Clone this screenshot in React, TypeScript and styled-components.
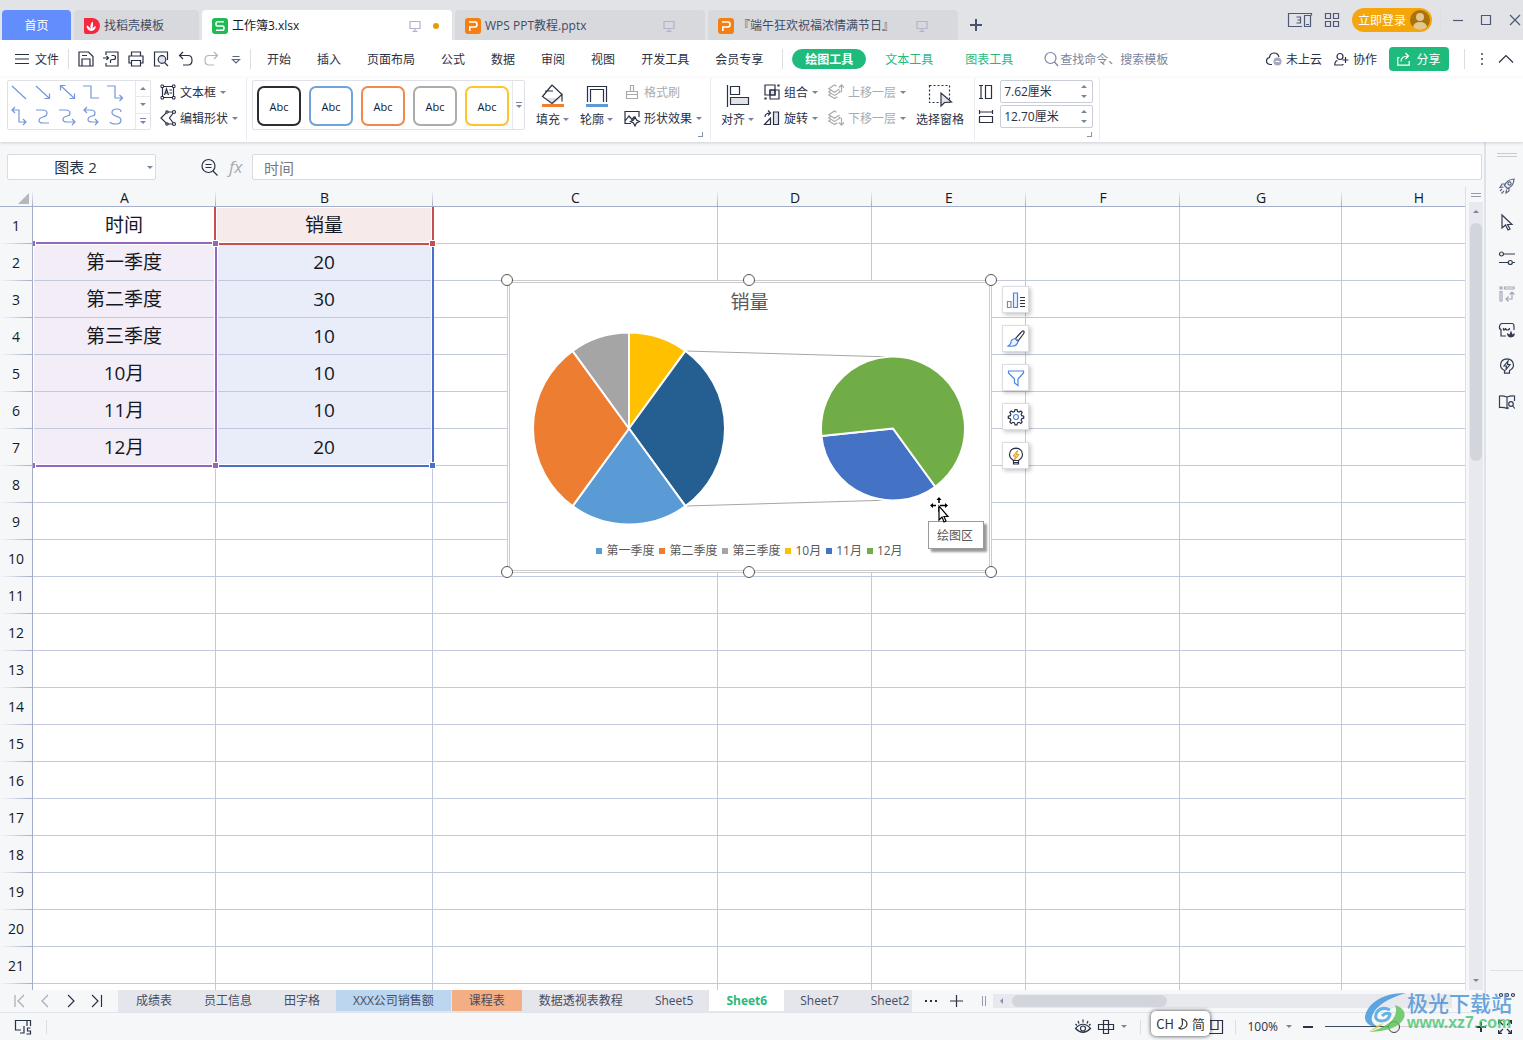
import React from "react";
import styled, { createGlobalStyle, css } from "styled-components";

const INK = "#2a3145";
const MUTED = "#7a84a0";
const GREEN = "#1fbb7d";
const LINE = "#c3c9dc";
const HEAD_LINE = "#a5aec8";
const PANEL = "#f5f7f9";
const LATIN_FIRST = '"Open Sans", "Noto Sans CJK SC", sans-serif';

const GlobalStyle = createGlobalStyle`
  * { box-sizing: border-box; }
  body {
    margin: 0;
    font-family: "Noto Sans CJK SC", sans-serif;
    font-size: 12px;
    line-height: 16px;
    color: ${INK};
    overflow: hidden;
  }
  button, input {
    font: inherit;
    color: inherit;
    margin: 0;
    padding: 0;
    border: 0;
    background: none;
    white-space: nowrap;
  }
`;

/* ---------- drawing helpers ---------- */

const Svg = styled.svg`
  display: block;
  flex: none;
  overflow: visible;
  fill: none;
  stroke: currentColor;
  stroke-width: 1.2;
`;

type IconProps = {
  children: React.ReactNode;
  w?: number;
  h?: number;
  color?: string;
};

const Icon = ({ children, w = 16, h = 16, color }: IconProps) => (
  <Svg width={w} height={h} viewBox={`0 0 ${w} ${h}`} color={color} aria-hidden="true">
    {children}
  </Svg>
);

const Caret = styled.i<{ $up?: boolean }>`
  flex: none;
  width: 0;
  height: 0;
  border: 3px solid transparent;
  ${(p) =>
    p.$up
      ? css`border-bottom: 3px solid ${MUTED}; border-top: 0;`
      : css`border-top: 3px solid ${MUTED}; border-bottom: 0;`}
`;

const Divider = styled.span<{ $h?: number }>`
  flex: none;
  width: 1px;
  height: ${(p) => p.$h ?? 20}px;
  background: #dcdee4;
`;

const Spacer = styled.span`
  flex: 1;
`;

/* ---------- page ---------- */

const Page = styled.div`
  position: relative;
  display: flex;
  flex-direction: column;
  height: 100vh;
  background: ${PANEL};
`;

/* ---------- title bar ---------- */

const TitleBar = styled.header`
  display: flex;
  flex: none;
  height: 40px;
  padding-left: 2px;
  background: #e2e3e7;
`;

const DocTabs = styled.nav`
  display: flex;
  align-items: flex-end;
  gap: 3px;
`;

const DocTab = styled.button<{ $kind?: "home" | "active"; $w: number }>`
  display: flex;
  align-items: center;
  justify-content: ${(p) => (p.$kind === "home" ? "center" : "flex-start")};
  gap: 4px;
  width: ${(p) => p.$w}px;
  height: 30px;
  padding: 2px ${(p) => (p.$kind === "home" ? 0 : 10)}px 0;
  border-radius: 4px 4px 0 0;
  font-family: ${LATIN_FIRST};
  background: ${(p) =>
    p.$kind === "home" ? "#628efd" : p.$kind === "active" ? "#fff" : "#d8d9dd"};
  color: ${(p) => (p.$kind === "home" ? "#fff" : p.$kind === "active" ? "#15181f" : "#434b62")};
`;

const TabTail = styled.span`
  display: flex;
  align-items: center;
  justify-content: flex-end;
  gap: 12px;
  flex: 1;
  padding: 0 3px 0 0;
`;

const QuietTail = styled(TabTail)`
  padding-right: 20px;
`;

const Dot = styled.i`
  width: 6px;
  height: 6px;
  border-radius: 50%;
  background: #e69a08;
`;

const NewTab = styled.button`
  display: grid;
  place-items: center;
  width: 30px;
  height: 30px;
  color: #4a536c;
`;

const WindowTools = styled.div`
  display: flex;
  align-items: center;
  gap: 8px;
  color: #4e5976;
`;

const AppTools = styled.div`
  display: flex;
  align-items: center;
  gap: 13px;
  margin-right: 5px;
`;

const LoginPill = styled.button`
  display: flex;
  align-items: center;
  gap: 4px;
  height: 24px;
  padding: 0 2px 0 6px;
  border-radius: 12px;
  background: #f5a60b;
  color: #fff;
`;

const WindowButtons = styled.div`
  display: flex;
  align-items: center;
  gap: 18px;
  padding: 0 2px 0 4px;
`;

const PlainButton = styled.button`
  display: flex;
  align-items: center;
  justify-content: center;
`;

/* ---------- menu row ---------- */

const MenuRow = styled.div`
  display: flex;
  flex: none;
  align-items: center;
  height: 38px;
  padding: 0 10px 0 15px;
  background: #fff;
`;

const FileButton = styled(PlainButton)`
  gap: 6px;
  margin-right: 9px;
`;

const QuickTools = styled.div`
  display: flex;
  align-items: center;
  gap: 9px;
  margin: 0 6px 0 9px;
`;

const MenuTabs = styled.nav`
  display: flex;
  align-items: center;
  gap: 26px;
  margin: 0 19px 0 16px;
`;

const MenuTab = styled.button<{ $green?: boolean }>`
  color: ${(p) => (p.$green ? GREEN : INK)};
`;

const ToolTabs = styled.nav`
  display: flex;
  align-items: center;
  gap: 32px;
`;

const ActiveTool = styled.button`
  height: 20px;
  padding: 0 13px;
  margin-left: 9px;
  margin-right: -13px;
  border-radius: 10px;
  background: ${GREEN};
  color: #fff;
  font-weight: 700;
`;

const SearchBox = styled.label`
  display: flex;
  align-items: center;
  width: 200px;
  margin-left: 31px;
  color: ${MUTED};
  input {
    flex: 1;
    min-width: 0;
    outline: none;
  }
  input::placeholder {
    color: ${MUTED};
    opacity: 1;
  }
`;

const RightMenu = styled.div`
  display: flex;
  align-items: center;
  gap: 12px;
`;

const LabelButton = styled(PlainButton)`
  gap: 4px;
`;

const ShareButton = styled(PlainButton)`
  gap: 6px;
  width: 60px;
  height: 24px;
  margin-right: 3px;
  border-radius: 4px;
  background: ${GREEN};
  color: #fff;
`;

/* ---------- ribbon ---------- */

const Ribbon = styled.section`
  position: relative;
  z-index: 2;
  display: flex;
  flex: none;
  height: 64px;
  padding-left: 7px;
  background: #fff;
  box-shadow: 0 1px 3px rgba(60, 70, 90, 0.22);
`;

const RibbonGroup = styled.div<{ $gap?: number; $pl?: number; $pr?: number }>`
  position: relative;
  display: flex;
  gap: ${(p) => p.$gap ?? 10}px;
  height: 62px;
  padding: 2px ${(p) => p.$pr ?? 6}px 0 ${(p) => p.$pl ?? 0}px;
  border-right: 1px solid #eaebef;
`;

const Gallery = styled.div`
  display: flex;
  height: 50px;
  border: 1px solid #dfe1e8;
  border-radius: 2px;
`;

const ShapeGrid = styled.div`
  display: grid;
  grid-template-columns: repeat(5, 24px);
  grid-template-rows: repeat(2, 24px);
  width: 127px;
  color: #7396dc;
`;

const SpinColumn = styled.div<{ $w: number }>`
  display: flex;
  flex-direction: column;
  width: ${(p) => p.$w}px;
  border-left: 1px solid #e6e8ee;
`;

const SpinCell = styled.button`
  display: flex;
  flex-direction: column;
  flex: 1;
  align-items: center;
  justify-content: center;
  gap: 2px;
  & + & {
    border-top: 1px solid #e6e8ee;
  }
`;

const Bar = styled.i`
  width: 6px;
  height: 1px;
  background: ${MUTED};
`;

const Stack = styled.div`
  display: flex;
  flex-direction: column;
  gap: 2px;
`;

const RowCommand = styled.button<{ $off?: boolean }>`
  display: flex;
  align-items: center;
  gap: 4px;
  height: 24px;
  color: ${(p) => (p.$off ? "#a9abb0" : INK)};
`;

const StyleList = styled.div`
  display: flex;
  gap: 8px;
  padding: 5px 3px 4px 4px;
`;

const StyleCard = styled.button<{ $c: string }>`
  width: 44px;
  height: 40px;
  padding-top: 1px;
  border: 2px solid ${(p) => p.$c};
  border-radius: 7px;
  color: #15181f;
  font-family: ${LATIN_FIRST};
  font-size: 11px;
`;

const BigCommand = styled.button`
  display: flex;
  flex-direction: column;
  align-items: center;
  gap: 4px;
  height: 48px;
  padding-top: 4px;
`;

const BigLabel = styled.span`
  display: flex;
  align-items: center;
  gap: 3px;
`;

const Corner = styled.i`
  position: absolute;
  right: 7px;
  bottom: 3px;
  width: 5px;
  height: 5px;
  border: solid #8b93a8;
  border-width: 0 1px 1px 0;
`;

const SizeRow = styled.label`
  display: flex;
  align-items: center;
  gap: 7px;
`;

const SizeBox = styled.span`
  display: flex;
  align-items: center;
  width: 93px;
  height: 23px;
  padding: 0 5px 0 3px;
  border: 1px solid #c9cdd8;
  border-radius: 2px;
  font-family: ${LATIN_FIRST};
  input {
    flex: 1;
    width: 60px;
    outline: none;
  }
`;

const Spin = styled.span`
  display: flex;
  flex-direction: column;
  gap: 7px;
`;

/* ---------- workspace ---------- */

const Workspace = styled.div`
  display: flex;
  flex: 1;
  min-height: 0;
`;

const MainColumn = styled.main`
  display: flex;
  flex-direction: column;
  flex: 1;
  min-width: 0;
`;

const FormulaBar = styled.div`
  display: flex;
  flex: none;
  align-items: center;
  height: 45px;
  padding: 5px 2px 0 7px;
  font-size: 15px;
`;

const NameBox = styled.div`
  display: flex;
  align-items: center;
  width: 149px;
  height: 26px;
  padding-right: 2px;
  margin-right: 45px;
  border: 1px solid #d9dbe1;
  border-radius: 2px;
  background: #fff;
  input {
    flex: 1;
    min-width: 0;
    padding-right: 4px;
    font-family: ${LATIN_FIRST};
    text-align: center;
    outline: none;
  }
`;

const FxLabel = styled.label`
  width: 34px;
  padding-left: 11px;
  font-family: "Open Sans", sans-serif;
  font-size: 17px;
  font-style: italic;
  color: #a8abb2;
`;

const FormulaInput = styled.input`
  flex: 1;
  height: 26px;
  padding: 0 11px;
  border: 1px solid #d9dbe1;
  border-radius: 2px;
  background: #fff;
  color: #777a80;
  outline: none;
  font-family: ${LATIN_FIRST};
  line-height: 22px;
`;

const SheetRow = styled.div`
  display: flex;
  flex: 1;
  min-height: 0;
`;

const Sheet = styled.div`
  flex: 1;
  min-width: 0;
  padding-top: 3px;
  overflow: hidden;
  border-right: 1px solid #dcdfe8;
`;

const Canvas = styled.div`
  position: relative;
  background: #fff;
`;

const Grid = styled.table`
  width: 1496px;
  table-layout: fixed;
  border-collapse: separate;
  border-spacing: 0;
  font-family: ${LATIN_FIRST};
  font-size: 19px;
  color: #15181f;
  th,
  td {
    padding: 0;
    font-weight: 400;
    text-align: center;
  }
`;

const ColHead = styled.th`
  height: 17px;
  border-bottom: 1px solid ${HEAD_LINE};
  background: linear-gradient(${PANEL}, ${HEAD_LINE}) right / 1px 100% no-repeat ${PANEL};
  font-size: 14px;
  line-height: 16px;
`;

const CornerHead = styled(ColHead)`
  svg {
    margin-left: 18px;
  }
`;

const RowHead = styled.th`
  height: 37px;
  border-right: 1px solid ${HEAD_LINE};
  background: linear-gradient(to right, ${PANEL}, ${HEAD_LINE}) bottom / 100% 1px no-repeat ${PANEL};
  font-size: 14px;
  line-height: 37px;
`;

const Cell = styled.td<{ $fill?: string }>`
  height: 37px;
  border-right: 1px solid ${LINE};
  border-bottom: 1px solid ${LINE};
  background: ${(p) => p.$fill ?? "#fff"};
  line-height: 36px;
`;

type FrameProps = { $x: number; $y: number; $w: number; $h: number; $c: string; $sides: string };

const RangeFrame = styled.div<FrameProps>`
  position: absolute;
  left: ${(p) => p.$x}px;
  top: ${(p) => p.$y}px;
  width: ${(p) => p.$w}px;
  height: ${(p) => p.$h}px;
  border: solid ${(p) => p.$c};
  border-width: ${(p) => p.$sides};
  box-shadow: inset 0 0 0 1px #fff;
`;

const RangeKnob = styled.i<{ $x: number; $y: number; $c: string; $half?: boolean }>`
  position: absolute;
  left: ${(p) => (p.$half ? p.$x : p.$x - 3)}px;
  top: ${(p) => p.$y - 3}px;
  width: ${(p) => (p.$half ? 3 : 7)}px;
  height: 7px;
  border: 1px solid #fff;
  border-left-width: ${(p) => (p.$half ? 0 : 1)}px;
  background: ${(p) => p.$c};
`;

/* ---------- chart object ---------- */

const ChartObject = styled.figure`
  position: absolute;
  left: 507px;
  top: 90px;
  width: 485px;
  height: 293px;
  margin: 0;
  border: 3px double #cbccd0;
  background: #fff;
  color: #595959;
  font-family: ${LATIN_FIRST};
`;

const ChartTitle = styled.figcaption`
  padding-top: 5px;
  font-size: 19px;
  line-height: 28px;
  text-align: center;
`;

const PieArea = styled.svg`
  display: block;
  margin: 16px 0 0 23px;
`;

const Legend = styled.ul`
  display: flex;
  justify-content: center;
  gap: 5px;
  margin: 17px 0 0;
  padding: 0;
  list-style: none;
`;

const LegendItem = styled.li<{ $c: string }>`
  display: flex;
  align-items: center;
  gap: 4px;
  &::before {
    content: "";
    width: 6px;
    height: 6px;
    background: ${(p) => p.$c};
  }
`;

const Handle = styled.i<{ $x: number; $y: number }>`
  position: absolute;
  left: calc(${(p) => p.$x}% - 6px);
  top: calc(${(p) => p.$y}% - 6px);
  width: 12px;
  height: 12px;
  border: 1px solid #555;
  border-radius: 50%;
  background: #fff;
`;

const HandleLayer = styled.div`
  position: absolute;
  inset: -3px -2px -2px -3px;
`;

const ChartTools = styled.div`
  position: absolute;
  left: 1002px;
  top: 96px;
  display: flex;
  flex-direction: column;
  gap: 12px;
`;

const ChartTool = styled.button`
  display: grid;
  place-items: center;
  width: 27px;
  height: 27px;
  border: 1px solid #dcdde2;
  background: #fff;
  box-shadow: 2px 2px 4px rgba(0, 0, 0, 0.22);
`;

const Tooltip = styled.div`
  position: absolute;
  left: 928px;
  top: 331px;
  padding: 5px 10px 5px 8px;
  border: 1px solid #9a9a9a;
  background: #fff;
  box-shadow: 3px 3px 2px rgba(0, 0, 0, 0.4);
  color: #575757;
`;

const Pointer = styled.div`
  position: absolute;
  left: 930px;
  top: 307px;
`;

/* ---------- scroll bars, side bar ---------- */

const ScrollColumn = styled.div`
  display: flex;
  flex: none;
  flex-direction: column;
  align-items: center;
  width: 18px;
  padding: 6px 0 0 1px;
`;

const SplitGrip = styled.i`
  width: 10px;
  height: 4px;
  margin-bottom: 5px;
  border: solid #929bb2;
  border-width: 1px 0;
`;

const VTrack = styled.div`
  display: flex;
  flex: 1;
  flex-direction: column;
  align-items: center;
  width: 14px;
  padding: 8px 0;
  background: #e8e9ef;
`;

const VThumb = styled.i`
  width: 12px;
  height: 238px;
  margin-top: 10px;
  border-radius: 6px;
  background: #d3d5dd;
`;

const SideBar = styled.aside`
  display: flex;
  flex: none;
  flex-direction: column;
  align-items: center;
  width: 39px;
  padding: 11px 0 8px 4px;
  border-left: 2px solid #e0e2ea;
  color: #343c52;
`;

const SideGrip = styled.i`
  width: 20px;
  height: 4px;
  margin-bottom: 21px;
  border: solid #c9cbd1;
  border-width: 1px 0;
`;

const SideTools = styled.div`
  display: flex;
  flex-direction: column;
  gap: 20px;
`;

const SideLine = styled.i`
  align-self: stretch;
  height: 1px;
  margin-bottom: 18px;
  background: #dfe1e8;
`;

/* ---------- sheet tabs ---------- */

const SheetBar = styled.div`
  display: flex;
  flex: none;
  align-items: center;
  height: 23px;
  border-bottom: 1px solid #e2e4eb;
`;

const SheetNav = styled.div`
  display: flex;
  align-items: center;
  gap: 10px;
  width: 118px;
  padding-left: 11px;
`;

const SheetTabs = styled.nav`
  display: flex;
  flex: none;
  width: 794px;
  height: 22px;
  padding-left: 2px;
  overflow: hidden;
  background: #e5e6ec;
`;

const SheetTab = styled.button<{ $fill?: string; $on?: boolean }>`
  flex: none;
  height: 21px;
  padding: 1px ${(p) => (p.$fill || p.$on ? 17 : 16)}px 0;
  margin-right: ${(p) => (p.$fill ? 1 : 0)}px;
  background: ${(p) => (p.$on ? "#fff" : p.$fill ?? "transparent")};
  color: ${(p) => (p.$on ? GREEN : "#454d63")};
  font-family: ${LATIN_FIRST};
  font-weight: ${(p) => (p.$on ? 700 : 400)};
`;

const SheetActions = styled.div`
  display: flex;
  align-items: center;
  gap: 12px;
  padding: 0 4px 0 12px;
`;

const HTrack = styled.div`
  display: flex;
  flex: 1;
  align-items: center;
  justify-content: space-between;
  height: 14px;
  margin-right: 32px;
  padding-right: 6px;
  background: #e8e9ef;
`;

const HThumb = styled.i`
  width: 155px;
  height: 12px;
  margin-left: 7px;
  border-radius: 6px;
  background: #d3d5dd;
`;

const HLead = styled.div`
  display: flex;
  align-items: center;
  padding-left: 6px;
`;

/* ---------- status bar ---------- */

const StatusBar = styled.footer`
  display: flex;
  flex: none;
  align-items: center;
  height: 27px;
  padding: 0 11px 0 15px;
`;

const StatusGroup = styled.div<{ $gap: number }>`
  display: flex;
  align-items: center;
  gap: ${(p) => p.$gap}px;
  font-family: ${LATIN_FIRST};
`;

const LayoutIcons = styled.div`
  display: flex;
  align-items: center;
  justify-content: space-between;
  width: 83px;
  margin: 0 12px 0 13px;
`;

const ZoomRange = styled.input`
  width: 138px;
  height: 14px;
  margin: 0 13px 0 12px;
  appearance: none;
  background: linear-gradient(to right, #3f4861 50%, #cfd3dd 50%) center / 100% 1px no-repeat;
  &::-webkit-slider-thumb {
    appearance: none;
    width: 12px;
    height: 12px;
    border: 1px solid #444;
    border-radius: 50%;
    background: #f0f0ee;
  }
`;

const ImeBadge = styled.div`
  position: absolute;
  right: 313px;
  bottom: 4px;
  z-index: 3;
  display: flex;
  align-items: center;
  gap: 4px;
  height: 25px;
  padding: 0 5px;
  border-radius: 5px;
  background: #fff;
  box-shadow: 0 0 4px rgba(0, 0, 0, 0.75);
  color: #333;
  font-size: 13px;
`;

const Watermark = styled.div`
  position: absolute;
  right: 11px;
  bottom: 8px;
  z-index: 4;
  display: flex;
  align-items: center;
  gap: 1px;
  opacity: 0.82;
  pointer-events: none;
`;

const MarkText = styled.div`
  display: flex;
  flex-direction: column;
  color: #4b93d6;
  font-family: "Noto Sans CJK SC", sans-serif;
  font-size: 21px;
  font-weight: 500;
  line-height: 23px;
`;

const MarkUrl = styled.span`
  color: #4cc46e;
  font-family: "Liberation Sans", Arial, sans-serif;
  font-size: 16px;
  font-weight: 700;
  line-height: 18px;
`;

/* ---------- icon drawings ---------- */

const ScreenIcon = () => (
  <Icon w={12} h={12} color="#aeb5cc">
    <path d="M1 1.500h10v7H1zM6 8.500V11M3.500 11.400h5" />
  </Icon>
);

const SLogo = () => (
  <Icon>
    <rect width="16" height="16" rx="3" fill="#1ebc53" stroke="none" />
    <path d="M12 3.800H5.600Q4 3.800 4 5.900T5.600 8h4.800Q12 8 12 10.100T10.400 12.200H4" stroke="#fff" strokeWidth="1.600" />
  </Icon>
);

const PLogo = () => (
  <Icon>
    <rect width="16" height="16" rx="3" fill="#f5800f" stroke="none" />
    <path d="M4.800 13V9H10Q12 9 12 6.500T10 4H4" stroke="#fff" strokeWidth="1.600" />
  </Icon>
);

const DocerLogo = () => (
  <Icon>
    <path d="M0 0h8a8 8 0 0 1 0 16H2a2 2 0 0 1-2-2z" fill="#f5283c" stroke="none" />
    <path d="M7 13C4 12.500 2.500 10.500 2.500 7.500c2 .6 3.600 2 4.200 4C6 8 6.500 5.500 8.500 3.500c1 2.500.8 5-.6 7.500 1-1.500 2.200-2.500 4-3-.2 3-1.700 4.700-4.900 5z" fill="#fff" stroke="none" />
  </Icon>
);

const LayerIcon = ({ down }: { down?: boolean }) => (
  <Icon>
    <path d="M8.500 2.200L6.500 1 .8 4.700l5.700 3.600 5-3.200M2.500 6.600L.8 7.900l5.700 3.500 5.700-3.500-1.400-1M2.500 9.800L.8 11l5.700 3.600 3-1.900" />
    {down ? <path d="M13.500 8v7M11 12.500l2.500 2.700 2.500-2.700" /> : <path d="M13.500 8V1M11 3.500L13.500.8 16 3.500" />}
  </Icon>
);

const shapes = [
  "M4 5l14 13",
  "M4 5l13 12M17.500 12.500v5h-5",
  "M5 5l13 12M18.500 12.500v5h-5M4.500 9.500v-5h5",
  "M3 5h8v12h8",
  "M3 5h8v12h7M15.500 14l3 3-3 3",
  "M4 5h7v12h7M15 14l3 3-3 3M7 2L4 5l3 3",
  "M4 5h6q5 0 5 3t-4 4q-4 1-4 3.500T11 18h6",
  "M3 5h6q5 0 5 3t-3 3q-4 1-4 3.500t4 2.500h7M16 14l3 3-3 3",
  "M4 5h6q5 0 5 3t-3 3q-4 1-4 3.500t4 2.500h6M15 14l3 3-3 3M7 2L4 5l3 3",
  "M17 7q0-3-4-3-5 0-5 3.500 0 2.500 4.500 3.800Q17 12.500 17 15q0 4-5 4-5 0-6-2",
];

const FillIcon = () => (
  <Icon w={24} h={23}>
    <path d="M5 14h15l-7.500 6z" fill="#dfe1e6" stroke="none" />
    <path d="M4 7h8M11 1L1.500 12.500 11 19.500 21 10.500 11 1M21 9.500v8" />
    <path d="M1 21.500h22" stroke="#ee7f33" strokeWidth="3" />
  </Icon>
);

const OutlineIcon = () => (
  <Icon w={24} h={23}>
    <path d="M2.500 18V2.500h19V18M5.500 18V5.500h13V18" />
    <path d="M1 21.500h22" stroke="#5b9bd5" strokeWidth="3" />
  </Icon>
);

const AlignIcon = () => (
  <Icon w={24} h={23}>
    <path d="M1.500 1v22M4.500 2.500h9v8h-9z" />
    <path d="M4.500 13.500h18v7h-18z" fill="#e1e3e9" />
  </Icon>
);

const SelectPaneIcon = () => (
  <Icon w={24} h={23}>
    <path d="M1.500 1.500h20v17h-20z" strokeDasharray="2 2" />
    <path d="M13 9v13l3.500-3.500 7-.5z" fill="#e1e3e9" />
  </Icon>
);

const GearPath = () => (
  <>
    <path d="M7 1.500h2l.5 2 1.500.6 1.800-1.100 1.400 1.400-1.100 1.800.6 1.500 2 .5v2l-2 .5-.6 1.500 1.100 1.800-1.400 1.400-1.800-1.100-1.500.6-.5 2H7l-.5-2-1.500-.6-1.800 1.100-1.400-1.400 1.100-1.800-.6-1.500-2-.5v-2l2-.5.6-1.500L1.800 4.400 3.200 3 5 4.100l1.500-.6z" />
    <circle cx="8" cy="9" r="2.500" stroke="#4a86e0" />
  </>
);

/* ---------- data ---------- */

const menuTabs = ["开始", "插入", "页面布局", "公式", "数据", "审阅", "视图", "开发工具", "会员专享"];

const styleColors = ["#2b2d33", "#6ea3dc", "#f0894a", "#acacac", "#fcc52c"];

const columns = [
  { name: "A", width: 183 },
  { name: "B", width: 217 },
  { name: "C", width: 285 },
  { name: "D", width: 154 },
  { name: "E", width: 154 },
  { name: "F", width: 154 },
  { name: "G", width: 162 },
  { name: "H", width: 154 },
];

const data: [string, string][] = [
  ["时间", "销量"],
  ["第一季度", "20"],
  ["第二季度", "30"],
  ["第三季度", "10"],
  ["10月", "10"],
  ["11月", "10"],
  ["12月", "20"],
];

const legend = [
  ["第一季度", "#5b9bd5"],
  ["第二季度", "#ed7d31"],
  ["第三季度", "#a5a5a5"],
  ["10月", "#ffc000"],
  ["11月", "#4472c4"],
  ["12月", "#70ad47"],
];

const mainSlices: [number, number, string][] = [
  [0, 36, "#ffc000"],
  [36, 144, "#255e91"],
  [144, 216, "#5b9bd5"],
  [216, 324, "#ed7d31"],
  [324, 360, "#a5a5a5"],
];

const subSlices: [number, number, string][] = [
  [144, 264, "#4472c4"],
  [264, 504, "#70ad47"],
];

const sheets: { name: string; fill?: string; on?: boolean }[] = [
  { name: "成绩表" },
  { name: "员工信息" },
  { name: "田字格" },
  { name: "XXX公司销售额", fill: "#bbd6ee" },
  { name: "课程表", fill: "#f4ae84" },
  { name: "数据透视表教程" },
  { name: "Sheet5" },
  { name: "Sheet6", on: true },
  { name: "Sheet7" },
  { name: "Sheet2" },
];

const slicePath = (cx: number, cy: number, r: number, from: number, to: number) => {
  const at = (deg: number) => {
    const a = (deg * Math.PI) / 180;
    return `${(cx + r * Math.sin(a)).toFixed(2)} ${(cy - r * Math.cos(a)).toFixed(2)}`;
  };
  return `M${cx} ${cy}L${at(from)}A${r} ${r} 0 ${to - from > 180 ? 1 : 0} 1 ${at(to)}Z`;
};

const cellFill = (row: number, col: number) => {
  if (row >= data.length || col > 1) return undefined;
  if (row === 0) return col === 1 ? "#f7eaea" : undefined;
  return col === 0 ? "#f3edf7" : "#e9edf9";
};

/* ---------- sections ---------- */

const TopBar = () => (
  <TitleBar>
    <DocTabs>
      <DocTab $kind="home" $w={69}>首页</DocTab>
      <DocTab $w={125}><DocerLogo />找稻壳模板</DocTab>
      <DocTab $kind="active" $w={250}>
        <SLogo />工作簿3.xlsx
        <TabTail><ScreenIcon /><Dot /></TabTail>
      </DocTab>
      <DocTab $w={250}>
        <PLogo />WPS PPT教程.pptx
        <QuietTail><ScreenIcon /></QuietTail>
      </DocTab>
      <DocTab $w={250}>
        <PLogo />『端午狂欢祝福浓情满节日』
        <QuietTail><ScreenIcon /></QuietTail>
      </DocTab>
      <NewTab aria-label="新建">
        <Icon w={12} h={12}><path d="M6 0v12M0 6h12" strokeWidth="2" /></Icon>
      </NewTab>
    </DocTabs>
    <Spacer />
    <WindowTools>
      <AppTools>
        <PlainButton aria-label="窗口">
          <Icon w={24} h={14}>
            <path d="M14 13.500H.5V.5h23v2M16.500 2.500h6v11h-6zM18 11.500h3M8.500 4h4v6h-4M9.500 7h3" />
          </Icon>
        </PlainButton>
        <PlainButton aria-label="应用">
          <Icon w={14} h={14}><path d="M.5.5h5v5h-5zM8.500.5h5v5h-5zM.5 8.500h5v5h-5zM8.500 8.500h5v5h-5z" /></Icon>
        </PlainButton>
      </AppTools>
      <LoginPill>
        立即登录
        <Icon w={20} h={20}>
          <circle cx="10" cy="10" r="10" fill="#a9730c" stroke="none" />
          <circle cx="10" cy="7" r="4" fill="#e3c690" stroke="none" />
          <path d="M3 17q1-5 7-5t7 5q-3 3-7 3t-7-3z" fill="#e3c690" stroke="none" />
        </Icon>
      </LoginPill>
      <Divider />
      <WindowButtons>
        <PlainButton aria-label="最小化"><Icon w={10} h={10}><path d="M0 5.500h10" /></Icon></PlainButton>
        <PlainButton aria-label="最大化"><Icon w={10} h={10}><path d="M.5.5h9v9h-9z" /></Icon></PlainButton>
        <PlainButton aria-label="关闭"><Icon w={12} h={10}><path d="M1 0l10 10M11 0L1 10" /></Icon></PlainButton>
      </WindowButtons>
    </WindowTools>
  </TitleBar>
);

const Menu = () => (
  <MenuRow>
    <FileButton>
      <Icon w={14} h={12}><path d="M0 1.500h14M0 6h14M0 10.500h14" /></Icon>文件
    </FileButton>
    <Divider />
    <QuickTools>
      <PlainButton aria-label="保存">
        <Icon><path d="M1 1h9.500L15 5.500V15H1zM4 15V8h8v7M4 4.500h5" /></Icon>
      </PlainButton>
      <PlainButton aria-label="输出为PDF">
        <Icon><path d="M3 4V1h12v14H3v-3M0 7h5.500M3.500 5L5.500 7l-2 2M7.500 12V9.500q0-1 1.500-1h1.500q2 0 2-2t-2-2h-2" /></Icon>
      </PlainButton>
      <PlainButton aria-label="打印">
        <Icon><path d="M3.500 5V1h9v4M3.500 12H1V5h14v7h-2.500M3.500 9.500h9V15h-9z" /></Icon>
      </PlainButton>
      <PlainButton aria-label="打印预览">
        <Icon><path d="M7 15H1.500V1h13v8" /><circle cx="9" cy="8.500" r="3.800" fill="#dfe2ea" /><path d="M11.500 11.500L15 15" /></Icon>
      </PlainButton>
      <PlainButton aria-label="撤销">
        <Icon><path d="M5 1L1.500 4.500 5 8M1.500 4.500H10q4 0 4 4.700t-4 4.800H5" /></Icon>
      </PlainButton>
      <PlainButton aria-label="恢复">
        <Icon color="#b3b5ba"><path d="M11 1l3.500 3.500L11 8M14.500 4.500H6q-4 0-4 4.700T6 14h5" /></Icon>
      </PlainButton>
      <PlainButton aria-label="更多">
        <Icon color="#5c6680"><path d="M4.500 5.500h7M4.500 8.500h7l-3.500 3.500z" /></Icon>
      </PlainButton>
    </QuickTools>
    <Divider />
    <MenuTabs>
      {menuTabs.map((t) => <MenuTab key={t}>{t}</MenuTab>)}
    </MenuTabs>
    <Divider />
    <ToolTabs>
      <ActiveTool>绘图工具</ActiveTool>
      <MenuTab $green>文本工具</MenuTab>
      <MenuTab $green>图表工具</MenuTab>
    </ToolTabs>
    <SearchBox>
      <Icon><circle cx="6.500" cy="7" r="5.500" /><path d="M10.500 11l3.500 4" /></Icon>
      <input aria-label="搜索" placeholder="查找命令、搜索模板" />
    </SearchBox>
    <Spacer />
    <RightMenu>
      <LabelButton>
        <Icon>
          <path d="M6 13.500H4q-3.500-.5-3.500-3.500T3.500 6.500Q4 2 8 2t5 4" />
          <circle cx="11.500" cy="10.500" r="4" fill="#a4aabb" stroke="none" />
          <path d="M9.500 10.500h4" stroke="#fff" />
        </Icon>
        未上云
      </LabelButton>
      <LabelButton>
        <Icon w={15} h={16}><circle cx="6" cy="5.500" r="3" /><path d="M9 14H.8q0-4 2.700-4.500M9 14v-1M11.500 6v6M8.500 9h6" /></Icon>
        协作
      </LabelButton>
      <ShareButton>
        <Icon w={13} h={14}><path d="M2.500 5.500H.8v7.700h11.400V9M4 9.500Q4 4 11 4M8.500 1L11.500 4l-3 3" /></Icon>
        分享
      </ShareButton>
      <Divider />
      <PlainButton aria-label="更多选项">
        <Icon w={10} h={12} color="#6b7389"><path d="M5 0v2M5 5v2M5 10v2" strokeWidth="2" /></Icon>
      </PlainButton>
      <PlainButton aria-label="折叠功能区">
        <Icon w={14} h={10}><path d="M0 8.500L7 1.500l7 7" /></Icon>
      </PlainButton>
    </RightMenu>
  </MenuRow>
);

const SpinButtons = () => (
  <Spin><Caret $up /><Caret /></Spin>
);

const RibbonBar = () => (
  <Ribbon>
    <RibbonGroup $gap={9} $pr={8}>
      <Gallery>
        <ShapeGrid>
          {shapes.map((d) => <Icon key={d} w={24} h={24}><path d={d} /></Icon>)}
        </ShapeGrid>
        <SpinColumn $w={15}>
          <SpinCell aria-label="上一行"><Caret $up /></SpinCell>
          <SpinCell aria-label="下一行"><Caret /></SpinCell>
          <SpinCell aria-label="更多形状"><Bar /><Caret /></SpinCell>
        </SpinColumn>
      </Gallery>
      <Stack>
        <RowCommand>
          <Icon>
            <path d="M2.500 2.500h11v11h-11zM4.500 11l2-6 2 6M5 9h3M9.500 6h2.500M9.500 9h2.500" />
            <path d="M1 1h2.500v2.500H1zM12.500 1H15v2.500h-2.500zM1 12.500h2.500V15H1zM12.500 12.500H15V15h-2.500z" fill="#fff" strokeWidth="1" />
          </Icon>
          文本框<Caret />
        </RowCommand>
        <RowCommand>
          <Icon>
            <path d="M14 2H7L1 8l6 6h7M14 2L9.500 8l4.500 6" />
            <circle cx="14" cy="2" r="1.500" fill="#fff" /><circle cx="14" cy="14" r="1.500" fill="#fff" />
            <circle cx="7" cy="2" r="1.200" fill="#fff" /><circle cx="7" cy="14" r="1.200" fill="#fff" />
          </Icon>
          编辑形状<Caret />
        </RowCommand>
      </Stack>
    </RibbonGroup>

    <RibbonGroup $gap={11} $pl={5} $pr={8}>
      <Gallery>
        <StyleList>
          {styleColors.map((c) => <StyleCard key={c} $c={c}>Abc</StyleCard>)}
        </StyleList>
        <SpinColumn $w={12}>
          <SpinCell aria-label="更多样式"><Bar /><Caret /></SpinCell>
        </SpinColumn>
      </Gallery>
      <BigCommand><FillIcon /><BigLabel>填充<Caret /></BigLabel></BigCommand>
      <BigCommand><OutlineIcon /><BigLabel>轮廓<Caret /></BigLabel></BigCommand>
      <Stack>
        <RowCommand $off>
          <Icon><path d="M6.500 7V1.500h3V7M2.500 14.500V7.500h11v7zM2.500 10.500h11" /></Icon>
          格式刷
        </RowCommand>
        <RowCommand>
          <Icon>
            <path d="M7 13.500H1V1.500h14V7M1 11l4-5 3 3.500 2.500-3" />
            <path d="M11 7l1.500 3 3 1.500-3 1.500-1.500 3-1.500-3-3-1.500 3-1.500z" fill="#fff" />
          </Icon>
          形状效果<Caret />
        </RowCommand>
      </Stack>
      <Corner />
    </RibbonGroup>

    <RibbonGroup $gap={10} $pl={10} $pr={10}>
      <BigCommand><AlignIcon /><BigLabel>对齐<Caret /></BigLabel></BigCommand>
      <Stack>
        <RowCommand>
          <Icon>
            <path d="M6 6h5v5H6z" fill="#dfe2ea" />
            <path d="M1 1h10v10H1zM6 6h9v9H6zM14 1h1v1h-1zM1 14h1v1H1z" />
          </Icon>
          组合<Caret />
        </RowCommand>
        <RowCommand>
          <Icon>
            <path d="M9.500 2h5v12.500h-5z" fill="#dfe2ea" />
            <path d="M6.500 8v6.500h-6zM1 7q0-4 5-4M4 .5L6.500 3 4 5.500" />
          </Icon>
          旋转<Caret />
        </RowCommand>
      </Stack>
      <Stack>
        <RowCommand $off><LayerIcon />上移一层<Caret /></RowCommand>
        <RowCommand $off><LayerIcon down />下移一层<Caret /></RowCommand>
      </Stack>
      <BigCommand><SelectPaneIcon /><BigLabel>选择窗格</BigLabel></BigCommand>
    </RibbonGroup>

    <RibbonGroup $pl={4} $pr={6}>
      <Stack>
        <SizeRow>
          <Icon w={14} h={14}><path d="M0 .5h4M0 13.500h4M2 .5v13M6.500.5h6v13h-6z" /></Icon>
          <SizeBox><input aria-label="高度" defaultValue="7.62厘米" /><SpinButtons /></SizeBox>
        </SizeRow>
        <SizeRow>
          <Icon w={14} h={14}><path d="M.5 0v4M13.500 0v4M.5 2h13M.5 6.500h13v6H.5z" /></Icon>
          <SizeBox><input aria-label="宽度" defaultValue="12.70厘米" /><SpinButtons /></SizeBox>
        </SizeRow>
      </Stack>
      <Corner />
    </RibbonGroup>
  </Ribbon>
);

const Chart = () => (
  <>
    <ChartObject>
      <ChartTitle>销量</ChartTitle>
      <PieArea width="434" height="194" viewBox="0 0 434 194">
        <path d="M152 19L360 25M153 174L360 168" stroke="#a6a6a6" />
        <g stroke="#fff" strokeWidth="2" strokeLinejoin="round">
          {mainSlices.map(([a, b, c]) => <path key={c} d={slicePath(96, 96.5, 96, a, b)} fill={c} />)}
          {subSlices.map(([a, b, c]) => <path key={c} d={slicePath(360, 96.5, 72, a, b)} fill={c} />)}
        </g>
      </PieArea>
      <Legend>
        {legend.map(([n, c]) => <LegendItem key={n} $c={c}>{n}</LegendItem>)}
      </Legend>
      <HandleLayer>
        <Handle $x={0} $y={0} /><Handle $x={50} $y={0} /><Handle $x={100} $y={0} />
        <Handle $x={0} $y={100} /><Handle $x={50} $y={100} /><Handle $x={100} $y={100} />
      </HandleLayer>
    </ChartObject>
    <ChartTools>
      <ChartTool aria-label="图表元素">
        <Icon w={18} h={18}>
          <path d="M.5 10.500h3.500v6H.5z" stroke="#888" />
          <path d="M6.500 2h4v14.500h-4z" stroke="#4a86e0" fill="#eaf2fd" />
          <path d="M13 6.500h5M13 9.500h5M13 12.500h5M13 15.500h5" />
        </Icon>
      </ChartTool>
      <ChartTool aria-label="图表样式">
        <Icon w={18} h={18}>
          <path d="M16.500 1q1.500 1-.5 3.500L11 11 8.500 8.500l5.500-6q1.500-2 2.500-1.500z" />
          <path d="M8 8.500l3 3q-1 4.500-5 4.500-3 .5-5 0 3-1.500 3-4t4-3.500z" stroke="#4a86e0" fill="#eaf2fd" />
        </Icon>
      </ChartTool>
      <ChartTool aria-label="图表筛选">
        <Icon w={18} h={18}><path d="M1.500 2h15v2L11 10v6.500L7.500 14v-4l-6-6z" stroke="#4a86e0" /></Icon>
      </ChartTool>
      <ChartTool aria-label="设置"><Icon w={16} h={18}><GearPath /></Icon></ChartTool>
      <ChartTool aria-label="智能推荐">
        <Icon w={18} h={18}>
          <path d="M6.500 13.500Q2.500 11 2.500 7.500 3 1.500 9 1.200q6 .3 6.500 6.300 0 3.500-4 6zM6.500 13.500v3.500h5v-3.500M6.500 15.500h5" />
          <path d="M10.500 3.500L6 9h2.500l-1 4L12 7.500H9.500z" fill="#ffd95a" stroke="#e59a1a" strokeWidth="1" />
        </Icon>
      </ChartTool>
    </ChartTools>
    <Tooltip role="tooltip">绘图区</Tooltip>
    <Pointer>
      <Icon w={18} h={28} color="#000">
        <path d="M9 2v4M9 10v5M2 8.500h4M10 8.500h6" strokeWidth="1.500" />
        <path d="M9 0l2.500 3h-5zM0 8.500L3 6v5zM18 8.500L15 6v5z" fill="#000" stroke="none" />
        <path d="M9 9v14l3-3 2 5 2-1-2-4.500h4z" fill="#fff" />
      </Icon>
    </Pointer>
  </>
);

const SheetArea = () => (
  <Sheet>
    <Canvas>
      <Grid>
        <colgroup>
          <col style={{ width: 33 }} />
          {columns.map((c) => <col key={c.name} style={{ width: c.width }} />)}
        </colgroup>
        <thead>
          <tr>
            <CornerHead aria-label="全选">
              <Icon w={11} h={11}><path d="M11 0v11H0z" fill="#b5b7bb" stroke="none" /></Icon>
            </CornerHead>
            {columns.map((c) => <ColHead key={c.name}>{c.name}</ColHead>)}
          </tr>
        </thead>
        <tbody>
          {Array.from({ length: 22 }, (_, r) => (
            <tr key={r}>
              <RowHead>{r < 21 ? r + 1 : ""}</RowHead>
              {columns.map((c, i) => (
                <Cell key={c.name} $fill={cellFill(r, i)}>{data[r]?.[i] ?? ""}</Cell>
              ))}
            </tr>
          ))}
        </tbody>
      </Grid>
      <RangeFrame $x={217} $y={54} $w={217} $h={223} $c="#4a6fcb" $sides="0 2px 2px 0" />
      <RangeFrame $x={214} $y={17} $w={220} $h={38} $c="#c5504f" $sides="0 2px 2px 2px" />
      <RangeFrame $x={33} $y={52} $w={184} $h={225} $c="#9467bd" $sides="2px 2px 2px 0" />
      <RangeKnob $x={33} $y={53} $c="#9467bd" $half />
      <RangeKnob $x={33} $y={275} $c="#9467bd" $half />
      <RangeKnob $x={215} $y={53} $c="#9467bd" />
      <RangeKnob $x={215} $y={275} $c="#9467bd" />
      <RangeKnob $x={432} $y={53} $c="#c5504f" />
      <RangeKnob $x={432} $y={275} $c="#4a6fcb" />
      <Chart />
    </Canvas>
  </Sheet>
);

const SideIcons = () => (
  <SideTools>
    <PlainButton aria-label="推荐功能">
      <Icon color="#5a6684">
        <path d="M5.500 7.500Q8 1.500 15 1q0 7-6.500 9.500zM6 6H3L1 9.500l3.500-.5M10 10v3l-3 2 .5-3.500M3 11l-2 2M5 13l-2.500 2.500" />
        <circle cx="10.500" cy="5.500" r="1.600" />
      </Icon>
    </PlainButton>
    <PlainButton aria-label="选择">
      <Icon><path d="M3 1v13l3.500-3 2.500 5 2-1-2.500-4.500H13z" /></Icon>
    </PlainButton>
    <PlainButton aria-label="属性">
      <Icon><path d="M5 4h11M0 4h1M0 12.500h9M13.500 12.500H16" /><circle cx="2.500" cy="4" r="2" /><circle cx="11.300" cy="12.500" r="2" /></Icon>
    </PlainButton>
    <PlainButton aria-label="分析工具">
      <Icon color="#a3a9b9"><path d="M1 1h2v2H1zM5.500 1H15v2H5.500zM1 5.500h2V15H1zM7 13h6V6M10.500 8.500L13 6l2.500 2.500M9.500 10.500L7 13l2.500 2.500" /></Icon>
    </PlainButton>
    <PlainButton aria-label="素材库">
      <Icon>
        <path d="M7 14H2V7.500Q0 7 .5 4.500 1 1.500 3 1.500h10q2 0 2 3V8M4.500 6v2q2 0 2-2 0 2 2 2t2-2" />
        <path d="M11.500 15.500Q8 15 8 11l2.500 1.500L12 8.500l1.500 4L15.500 11q1 4-4 4.500z" fill="#343c52" stroke="none" />
      </Icon>
    </PlainButton>
    <PlainButton aria-label="智能">
      <Icon><path d="M5.500 12.500Q1.500 10.500 1.500 7 2 1 8 .8 14 1 14.500 7q0 3.500-4 5.500v2.700h-5zM9 3L5 8h2.500L7 11.500 11 6.500H8.500z" /></Icon>
    </PlainButton>
    <PlainButton aria-label="帮助">
      <Icon><path d="M8 3Q4 1.500.5 2v11.500q4-.5 7.500 1zM8 3q4-1.500 7.500-1v5M8 14.500l2-.8" /><circle cx="12" cy="10" r="2.300" /><path d="M13.800 12l2 2.500" /></Icon>
    </PlainButton>
  </SideTools>
);

const SheetTabBar = () => (
  <SheetBar>
    <SheetNav>
      <PlainButton aria-label="第一张"><Icon color="#a6abb8"><path d="M4 2v12M13 2L7 8l6 6" /></Icon></PlainButton>
      <PlainButton aria-label="上一张"><Icon color="#a6abb8"><path d="M11 2L5 8l6 6" /></Icon></PlainButton>
      <PlainButton aria-label="下一张"><Icon><path d="M5 2l6 6-6 6" /></Icon></PlainButton>
      <PlainButton aria-label="最后一张"><Icon><path d="M3 2l6 6-6 6M12.500 2v12" /></Icon></PlainButton>
    </SheetNav>
    <SheetTabs>
      {sheets.map((s) => <SheetTab key={s.name} $fill={s.fill} $on={s.on}>{s.name}</SheetTab>)}
    </SheetTabs>
    <SheetActions>
      <PlainButton aria-label="更多工作表">
        <Icon w={14} h={12}><path d="M1 6h2M6 6h2M11 6h2" strokeWidth="2" /></Icon>
      </PlainButton>
      <PlainButton aria-label="新建工作表">
        <Icon w={13} h={12}><path d="M6.500 0v12M0 6h13" /></Icon>
      </PlainButton>
      <Icon w={14} h={12} color="#929bb2"><path d="M7.500 1v10M10.500 1v10" strokeWidth="1" /></Icon>
    </SheetActions>
    <HTrack>
      <HLead>
        <Icon w={6} h={8} color="#8791ab"><path d="M4 1v6L1 4z" fill="currentColor" stroke="none" /></Icon>
        <HThumb />
      </HLead>
      <Icon w={6} h={8} color="#8791ab"><path d="M1 1v6l3-3z" fill="currentColor" stroke="none" /></Icon>
    </HTrack>
  </SheetBar>
);

const Status = () => (
  <StatusBar>
    <StatusGroup $gap={14}>
      <PlainButton aria-label="宏">
        <Icon w={17} h={16}><path d="M6 11H.5V1.500h11M12 7V1.500h3.500V7M5 14h4V7M15.500 9h-3v3h3v3h-4" /></Icon>
      </PlainButton>
      <Divider $h={14} />
    </StatusGroup>
    <Spacer />
    <StatusGroup $gap={7}>
      <PlainButton aria-label="护眼模式">
        <Icon><path d="M.5 9.500Q8 1 15.500 9.500 8 17 .5 9.500zM8 .5v3M3 2l1 2.500M13 2l-1 2.500M.5 5l1.500 1.500M15.500 5L14 6.500" /><circle cx="8" cy="9.500" r="2.500" /></Icon>
      </PlainButton>
      <PlainButton aria-label="阅读模式">
        <Icon><path d="M5.500 1.500h5v13h-5zM.5 5.500h15v5H.5z" /></Icon>
      </PlainButton>
      <Caret />
    </StatusGroup>
    <LayoutIcons>
      <Divider $h={14} />
      <PlainButton aria-label="分页预览">
        <Icon w={16} h={14}><path d="M0 .5h15.500v13H0M11 .5v9H4v-9" /></Icon>
      </PlainButton>
    </LayoutIcons>
    <StatusGroup $gap={11}>
      <Divider $h={14} />
      <StatusGroup $gap={8}><PlainButton>100%</PlainButton><Caret /></StatusGroup>
      <PlainButton aria-label="缩小"><Icon w={10} h={12}><path d="M0 6h10" strokeWidth="2" /></Icon></PlainButton>
    </StatusGroup>
    <ZoomRange type="range" aria-label="缩放" defaultValue={50} />
    <StatusGroup $gap={12}>
      <PlainButton aria-label="放大"><Icon w={10} h={12}><path d="M5 1v10M0 6h10" strokeWidth="2" /></Icon></PlainButton>
      <PlainButton aria-label="全屏">
        <Icon w={14} h={14}><path d="M.6 4V.6H4M10 .6h3.400V4M13.400 10v3.400H10M4 13.400H.6V10M1 1l4 4M13 1L9 5M13 13L9 9M1 13l4-4" /></Icon>
      </PlainButton>
    </StatusGroup>
  </StatusBar>
);

const SiteMark = () => (
  <Watermark>
    <Icon w={42} h={40}>
      <path d="M42 1Q18 1 6 14-3 26 4 32q4 3 9 2-8-4-4-12Q15 9 42 1z" fill="#3f96dc" stroke="none" />
      <path d="M31 13q12 4 9 13Q34 39 5 40q12-3 20-9 10-8 6-18z" fill="#5cc257" stroke="none" />
      <path d="M26 18q-8-4-13 2-4 8 4 9 8 0 9-7-4-2-8 2" stroke="#4aa3df" strokeWidth="3" />
      <path d="M5 40q10-4 15-9l-6 2q-5 4-9 7z" fill="#d9cf3f" stroke="none" />
    </Icon>
    <MarkText>极光下载站<MarkUrl>www.xz7.com</MarkUrl></MarkText>
  </Watermark>
);

export default function App() {
  return (
    <Page>
      <GlobalStyle />
      <TopBar />
      <Menu />
      <RibbonBar />
      <Workspace>
        <MainColumn>
          <FormulaBar>
            <NameBox><input aria-label="名称框" defaultValue="图表 2" /><Caret /></NameBox>
            <PlainButton aria-label="浏览公式">
              <Icon w={17} h={18}><circle cx="7.500" cy="8" r="6.500" /><path d="M4.500 6.500h6M4.500 9.500h6M12 13l4.500 4.500" /></Icon>
            </PlainButton>
            <FxLabel htmlFor="formula">fx</FxLabel>
            <FormulaInput id="formula" defaultValue="时间" />
          </FormulaBar>
          <SheetRow>
            <SheetArea />
            <ScrollColumn>
              <SplitGrip />
              <VTrack><Caret $up /><VThumb /><Spacer /><Caret /></VTrack>
            </ScrollColumn>
          </SheetRow>
          <SheetTabBar />
        </MainColumn>
        <SideBar>
          <SideGrip />
          <SideIcons />
          <Spacer />
          <SideLine />
          <PlainButton aria-label="更多工具">
            <Icon w={16} h={16}><circle cx="2" cy="6" r="1.500" /><circle cx="8" cy="6" r="1.500" /><circle cx="14" cy="6" r="1.500" /></Icon>
          </PlainButton>
        </SideBar>
      </Workspace>
      <Status />
      <ImeBadge>
        CH
        <Icon w={10} h={12}><path d="M4 1q5 1.500 5 5t-5 5Q2 11 1 10q5-1.500 3-9z" /></Icon>
        简
      </ImeBadge>
      <SiteMark />
    </Page>
  );
}
